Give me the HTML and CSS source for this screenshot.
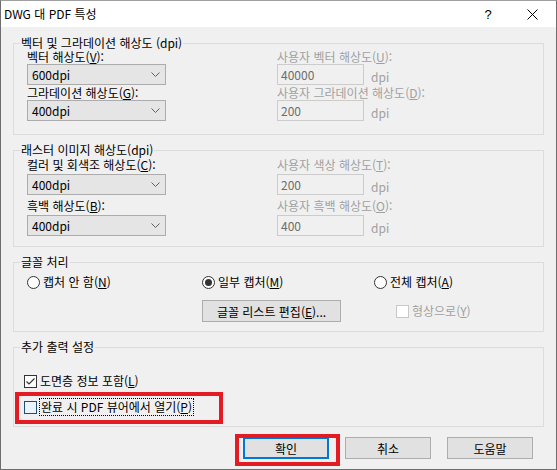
FILE: index.html
```html
<!DOCTYPE html>
<html lang="ko">

<head>
    <meta charset="UTF-8">
    <meta name="viewport" content="width=device-width, initial-scale=1.0">
    <title>DWG 대 PDF 특성</title>
    <link rel="stylesheet" href="styles.css">
</head>

<body>
    <div class="dialog">
        <div class="titlebar">
            <span class="title">DWG 대 PDF 특성</span>
            <span class="help">?</span>
            <span class="close">
                <svg width="11" height="11" viewBox="0 0 11 11"><path d="M0.5 0.5L10.5 10.5M10.5 0.5L0.5 10.5" stroke="#000" stroke-width="1" fill="none"/></svg>
            </span>
        </div>

        <div class="content">
            <fieldset class="group">
                <legend>벡터 및 그라데이션 해상도 (dpi)</legend>
                <div class="grid grid-vector">
                    <div class="label">벡터 해상도(<u>V</u>):</div>
                    <div class="label disabled">사용자 벡터 해상도(<u>U</u>):</div>
                    <div class="combo"><span>600dpi</span><svg width="9" height="5" viewBox="0 0 9 5"><path d="M0.5 0.5L4.5 4.5L8.5 0.5" stroke="#606060" fill="none"/></svg></div>
                    <div class="field"><span class="input">40000</span><span class="unit">dpi</span></div>
                    <div class="label">그라데이션 해상도(<u>G</u>):</div>
                    <div class="label disabled">사용자 그라데이션 해상도(<u>D</u>):</div>
                    <div class="combo"><span>400dpi</span><svg width="9" height="5" viewBox="0 0 9 5"><path d="M0.5 0.5L4.5 4.5L8.5 0.5" stroke="#606060" fill="none"/></svg></div>
                    <div class="field"><span class="input">200</span><span class="unit">dpi</span></div>
                </div>
            </fieldset>

            <fieldset class="group">
                <legend>래스터 이미지 해상도(dpi)</legend>
                <div class="grid grid-raster">
                    <div class="label">컬러 및 회색조 해상도(<u>C</u>):</div>
                    <div class="label disabled">사용자 색상 해상도(<u>T</u>):</div>
                    <div class="combo"><span>400dpi</span><svg width="9" height="5" viewBox="0 0 9 5"><path d="M0.5 0.5L4.5 4.5L8.5 0.5" stroke="#606060" fill="none"/></svg></div>
                    <div class="field"><span class="input">200</span><span class="unit">dpi</span></div>
                    <div class="label">흑백 해상도(<u>B</u>):</div>
                    <div class="label disabled">사용자 흑백 해상도(<u>O</u>):</div>
                    <div class="combo"><span>400dpi</span><svg width="9" height="5" viewBox="0 0 9 5"><path d="M0.5 0.5L4.5 4.5L8.5 0.5" stroke="#606060" fill="none"/></svg></div>
                    <div class="field"><span class="input">400</span><span class="unit">dpi</span></div>
                </div>
            </fieldset>

            <fieldset class="group">
                <legend>글꼴 처리</legend>
                <div class="fonts">
                    <label class="option"><span class="radio"></span><span>캡처 안 함(<u>N</u>)</span></label>
                    <label class="option"><span class="radio checked"></span><span>일부 캡처(<u>M</u>)</span></label>
                    <label class="option"><span class="radio"></span><span>전체 캡처(<u>A</u>)</span></label>
                    <span></span>
                    <span class="button wide">글꼴 리스트 편집(<u>E</u>)...</span>
                    <label class="option disabled shape"><span class="check off"></span><span>형상으로(<u>Y</u>)</span></label>
                </div>
            </fieldset>

            <fieldset class="group">
                <legend>추가 출력 설정</legend>
                <div class="extras">
                    <label class="option">
                        <span class="check"><svg width="11" height="11" viewBox="0 0 11 11"><path d="M1.5 5.5L4 8L9.5 2.5" stroke="#333" stroke-width="1.2" fill="none"/></svg></span>
                        <span>도면층 정보 포함(<u>L</u>)</span>
                    </label>
                    <label class="option marked"><span class="check hover"></span><span class="focus">완료 시 PDF 뷰어에서 열기(<u>P</u>)</span></label>
                </div>
            </fieldset>

            <div class="actions">
                <span class="button default marked-button">확인</span>
                <span class="button">취소</span>
                <span class="button">도움말</span>
            </div>
        </div>
    </div>
</body>

</html>
```

FILE: styles.css
```css
*,
*::before,
*::after {
    box-sizing: border-box;
}

body {
    margin: 0;
    font-family: "Noto Sans CJK KR", "Liberation Sans", sans-serif;
    font-size: 12px;
    color: #000;
    background-color: #f0f0f0;
}

u {
    text-underline-offset: 1px;
}

.dialog {
    width: 557px;
    height: 470px;
    border: 1px solid #6e6e6e;
    border-top-color: #a0a0a0;
    background-color: #f0f0f0;
}

.titlebar {
    height: 26px;
    background-color: #fff;
    display: flex;
    align-items: center;
    padding-left: 3px;
}

.title {
    flex: 1;
    line-height: 14px;
}

.help {
    width: 8px;
    margin-right: 35px;
    text-align: center;
    font-family: "Liberation Sans", sans-serif;
    font-size: 13px;
}

.close {
    display: flex;
    margin-right: 18px;
}

.content {
    padding: 9px 12px 0;
}

.group {
    margin: 0;
    padding: 0;
    min-width: 0;
    border: 1px solid #dcdcdc;
}

.group + .group {
    margin-top: 8px;
}

legend {
    margin-left: 6px;
    padding: 0 1px;
    line-height: 14px;
}

.grid {
    display: grid;
    grid-template-columns: 250px 1fr;
    align-items: start;
    padding-left: 13px;
}

.grid-vector {
    grid-template-rows: 14px 22px 14px 21px;
    padding-bottom: 13px;
}

.grid-raster {
    grid-template-rows: 16px 25px 16px 22px;
    padding-bottom: 10px;
}

.grid-raster .combo,
.grid-raster .field {
    margin-top: 1px;
}

.label {
    line-height: 14px;
    white-space: nowrap;
}

.grid-raster .label {
    line-height: 16px;
}

.disabled {
    color: #a0a0a0;
}

.combo {
    width: 139px;
    height: 21px;
    display: flex;
    align-items: center;
    justify-content: space-between;
    padding: 0 5px 0 4px;
    background-color: #e5e5e5;
    border: 1px solid #acacac;
}

.field {
    display: flex;
    align-items: center;
    gap: 7px;
}

.input {
    width: 87px;
    height: 21px;
    padding-left: 3px;
    line-height: 19px;
    color: #6d6d6d;
    border: 1px solid #cccccc;
}

.unit {
    color: #a0a0a0;
    padding-top: 3px;
}

.fonts {
    display: grid;
    grid-template-columns: 175px 172px 1fr;
    grid-template-rows: 16px 22px;
    row-gap: 10px;
    align-items: center;
    padding: 5px 0 9px 13px;
}

.option {
    display: inline-flex;
    align-items: center;
    gap: 3px;
    line-height: 16px;
    white-space: nowrap;
}

.radio {
    width: 13px;
    height: 13px;
    border: 1px solid #333;
    border-radius: 50%;
    background-color: #fff;
    display: flex;
    align-items: center;
    justify-content: center;
}

.radio.checked::after {
    content: "";
    width: 7px;
    height: 7px;
    border-radius: 50%;
    background-color: #333;
}

.check {
    width: 13px;
    height: 13px;
    border: 1px solid #333;
    background-color: #fff;
    display: flex;
    align-items: center;
    justify-content: center;
}

.check.off {
    border-color: #c8c8c8;
}

.check.hover {
    border-color: #1e4f7a;
    background-color: #eaf4fc;
}

.shape {
    margin-left: 22px;
}

.button {
    width: 86px;
    height: 22px;
    display: inline-flex;
    align-items: center;
    justify-content: center;
    background-color: #e1e1e1;
    border: 1px solid #adadad;
    white-space: nowrap;
}

.button.wide {
    width: 139px;
}

.button.default {
    border: 2px solid #0078d7;
}

.extras {
    display: flex;
    flex-direction: column;
    align-items: flex-start;
    gap: 10px;
    padding: 19px 0 11px 10px;
}

.focus {
    outline: 1px dotted #000;
    outline-offset: 0;
    padding: 0 1px;
}

.marked,
.marked-button {
    position: relative;
}

.marked::before {
    content: "";
    position: absolute;
    left: -9px;
    top: -7px;
    width: 208px;
    height: 32px;
    border: 4px solid #e31c24;
}

.marked-button::before {
    content: "";
    position: absolute;
    left: -10px;
    top: -5px;
    width: 105px;
    height: 32px;
    border: 4px solid #e31c24;
}

.actions {
    display: flex;
    justify-content: flex-end;
    gap: 16px;
    margin-top: 10px;
    padding-right: 11px;
}
```
